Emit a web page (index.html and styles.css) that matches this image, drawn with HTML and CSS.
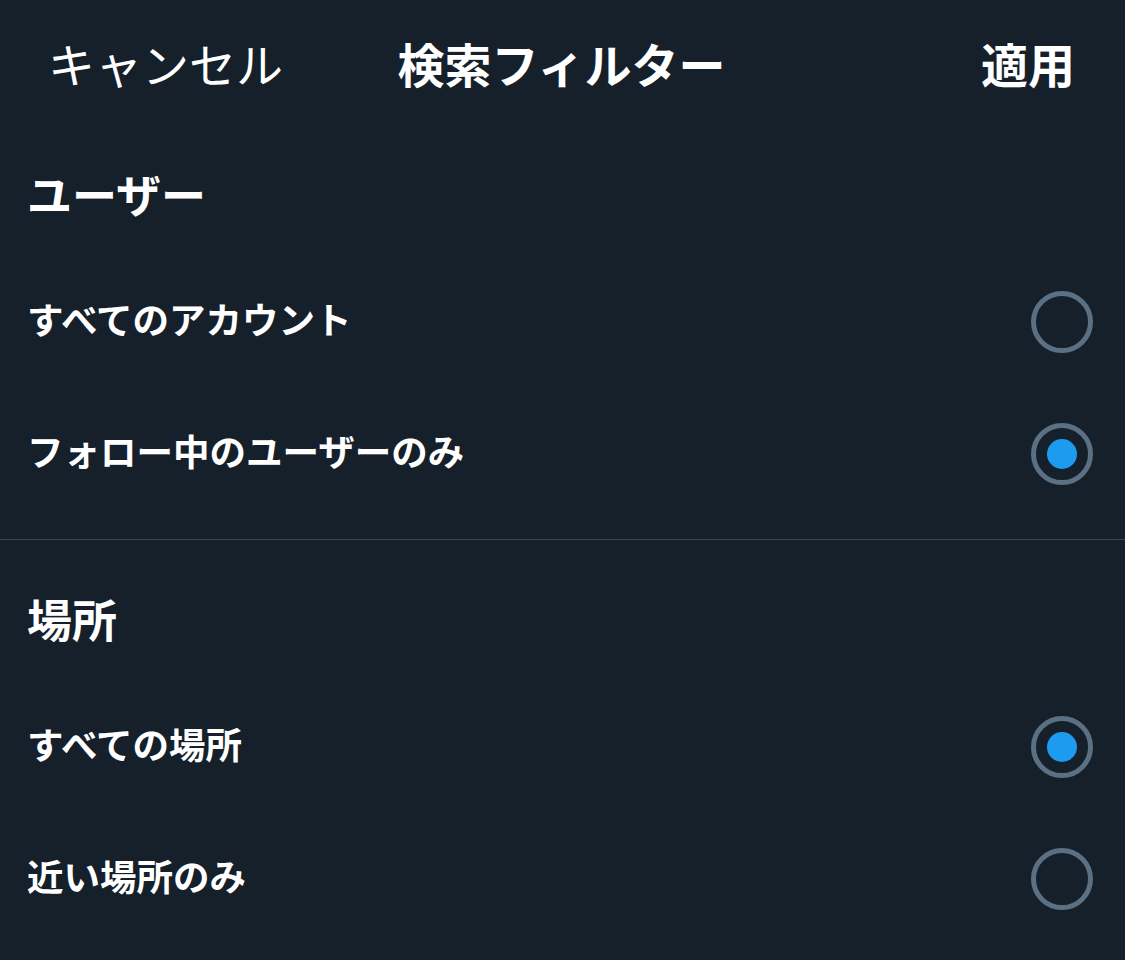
FILE: index.html
```html
<!DOCTYPE html>
<html lang="ja">
<head>
<meta charset="utf-8">
<title>検索フィルター</title>
<link rel="stylesheet" href="styles.css">
</head>
<body>
<div class="screen">
  <header class="topbar">
    <span class="cancel">キャンセル</span>
    <span class="title">検索フィルター</span>
    <span class="apply">適用</span>
  </header>

  <section class="section section-first">
    <h2 class="section-heading">ユーザー</h2>
    <div class="row">
      <span class="label">すべてのアカウント</span>
      <span class="radio"></span>
    </div>
    <div class="row">
      <span class="label">フォロー中のユーザーのみ</span>
      <span class="radio radio-on"><span class="dot"></span></span>
    </div>
  </section>

  <section class="section section-second">
    <h2 class="section-heading">場所</h2>
    <div class="row">
      <span class="label">すべての場所</span>
      <span class="radio radio-on"><span class="dot"></span></span>
    </div>
    <div class="row">
      <span class="label">近い場所のみ</span>
      <span class="radio"></span>
    </div>
  </section>
</div>
</body>
</html>
```

FILE: styles.css
```css
html, body {
  margin: 0;
  padding: 0;
  background: #15202b;
}

body {
  font-family: "Noto Sans CJK JP", "Noto Sans", sans-serif;
  color: #ffffff;
}

.screen {
  width: 1125px;
  height: 960px;
  overflow: hidden;
  background: #15202b;
}

.topbar {
  height: 134px;
  display: grid;
  grid-template-columns: 1fr auto 1fr;
  align-items: center;
  padding: 0 50px 10px 48px;
  box-sizing: border-box;
  font-size: 47px;
  line-height: 1;
}

.cancel {
  font-weight: 400;
  justify-self: start;
}

.title {
  font-weight: 700;
  justify-self: center;
}

.apply {
  font-weight: 700;
  justify-self: end;
}

.section {
  padding: 0 32px 0 27px;
}

.section-first {
  padding-bottom: 19px;
  border-bottom: 1px solid #38444d;
}

.section-second {
  padding-top: 19px;
}

.section-heading {
  margin: 0;
  height: 122px;
  box-sizing: border-box;
  padding-bottom: 4px;
  display: flex;
  align-items: center;
  font-size: 45px;
  font-weight: 700;
  line-height: 1;
}

.row {
  height: 132px;
  display: flex;
  align-items: center;
  justify-content: space-between;
}

.label {
  font-size: 36.5px;
  font-weight: 700;
  line-height: 1;
  padding-bottom: 6px;
}

.radio {
  width: 62px;
  height: 62px;
  box-sizing: border-box;
  border: 5px solid #5b7083;
  border-radius: 50%;
  display: flex;
  align-items: center;
  justify-content: center;
}

.dot {
  width: 30px;
  height: 30px;
  border-radius: 50%;
  background: #1d9bf0;
}
```
